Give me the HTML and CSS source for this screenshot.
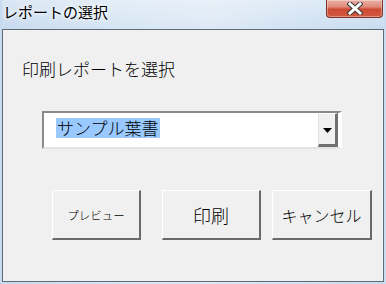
FILE: index.html
```html
<!DOCTYPE html>
<html lang="ja">
<head>
<meta charset="utf-8">
<link rel="stylesheet" href="styles.css">
</head>
<body>
<div class="window">
  <div class="titlebar">
    <span class="title">レポートの選択</span>
    <div class="close">
      <svg width="16" height="13" viewBox="0 0 16 13">
        <path d="M3 2 L13 11 M13 2 L3 11" stroke="#3a3a3a" stroke-width="5" stroke-linecap="square"/>
        <path d="M3 2 L13 11 M13 2 L3 11" stroke="#ffffff" stroke-width="3" stroke-linecap="square"/>
      </svg>
    </div>
  </div>
  <div class="client">
    <div class="label">印刷レポートを選択</div>
    <div class="combo">
      <div class="combo-field"><span class="sel">サンプル葉書</span></div>
      <div class="combo-btn">
        <svg width="9" height="5" viewBox="0 0 9 5"><path d="M0 0 H9 L4.5 5 Z" fill="#000"/></svg>
      </div>
    </div>
    <div class="buttons">
      <div class="btn btn-preview"><span class="small">プレビュー</span></div>
      <div class="btn btn-print">印刷</div>
      <div class="btn btn-cancel">キャンセル</div>
    </div>
  </div>
</div>
</body>
</html>
```
FILE: styles.css
```css
html, body {
  margin: 0;
  padding: 0;
}
body {
  width: 386px;
  height: 284px;
  overflow: hidden;
  font-family: "Noto Sans CJK JP", "Noto Sans", sans-serif;
  font-weight: 300;
}
.window {
  width: 386px;
  height: 284px;
  box-sizing: border-box;
  background: linear-gradient(90deg, #c7daee 0%, #d6e5f4 30%, #dde9f5 55%, #cfe1f3 80%, #c9dcef 100%);
  display: flex;
  flex-direction: column;
  padding: 0 2px 2px 2px;
}
.titlebar {
  height: 29px;
  display: flex;
  align-items: flex-start;
  justify-content: space-between;
  background: linear-gradient(180deg, rgba(255,255,255,0.35) 0%, rgba(255,255,255,0) 100%);
}
.title {
  font-size: 15px;
  line-height: 15px;
  color: #000;
  font-weight: 400;
  margin: 4px 0 0 1px;
  text-shadow: 0 0 6px #ffffff, 0 0 3px #ffffff;
}
.close {
  width: 57px;
  height: 18px;
  margin-right: 1px;
  box-sizing: border-box;
  border: 1px solid #7e3226;
  border-top: none;
  border-radius: 0 0 4px 4px;
  background: linear-gradient(180deg, #eab1a5 0%, #de8a78 40%, #cc4a33 55%, #d25a3f 100%);
  display: flex;
  align-items: center;
  justify-content: center;
  box-shadow: inset 0 0 0 1px rgba(255,255,255,0.35);
}
.client {
  flex: 1;
  background: #f0f0f0;
  border: 1px solid #5f6b78;
  display: flex;
  flex-direction: column;
  padding-left: 19px;
}
.label {
  font-size: 17px;
  line-height: 20px;
  color: #000;
  margin-top: 29px;
}
.combo {
  margin-top: 32px;
  margin-left: 20px;
  width: 300px;
  height: 38px;
  box-sizing: border-box;
  border-top: 2px solid #8a8a8a;
  border-left: 2px solid #8a8a8a;
  border-right: 3px solid #ffffff;
  border-bottom: 2px solid #e3e3e3;
  background: #fff;
  display: flex;
}
.combo-field {
  flex: 1;
  padding: 3px 0 0 12px;
}
.sel {
  display: inline-block;
  background: #99c9ff;
  color: #000;
  font-size: 17px;
  line-height: 20px;
  padding: 0 1px;
}
.combo-btn {
  width: 20px;
  box-sizing: border-box;
  margin-right: 1px;
  background: #f0f0f0;
  border-top: 1px solid #ffffff;
  border-left: 1px solid #e3e3e3;
  border-right: 3px solid #707070;
  border-bottom: 3px solid #707070;
  display: flex;
  align-items: center;
  justify-content: center;
  padding-top: 3px;
}
.buttons {
  display: flex;
  margin-top: 41px;
  margin-left: 30px;
}
.btn {
  height: 50px;
  box-sizing: border-box;
  background: #f0f0f0;
  border-top: 1px solid #ffffff;
  border-left: 1px solid #ffffff;
  border-right: 2px solid #696969;
  border-bottom: 2px solid #696969;
  display: flex;
  align-items: center;
  justify-content: center;
  color: #000;
}
.btn-preview {
  width: 89px;
}
.btn-print {
  width: 99px;
  margin-left: 21px;
  font-size: 18px;
}
.btn-cancel {
  width: 100px;
  margin-left: 11px;
  font-size: 16px;
}
.small {
  font-size: 11.5px;
}
```
